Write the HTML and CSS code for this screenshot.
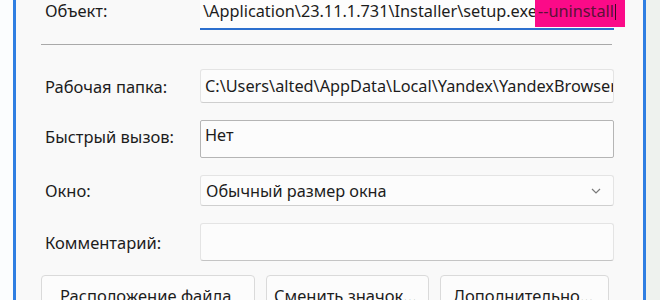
FILE: index.html
```html
<!DOCTYPE html>
<html lang="ru">

<head>
    <meta charset="UTF-8" />
    <meta name="viewport" content="width=device-width, initial-scale=1.0" />
    <title>Свойства ярлыка</title>
    <link rel="stylesheet" href="styles.css">
</head>

<body>
    <div class="edge-left"></div>
    <div class="stripe"></div>

    <div class="dialog">
        <div class="row row-target">
            <label class="label">Объект:</label>
            <div class="field field-active">
                <span>\Application\23.11.1.731\Installer\setup.exe </span><span class="mark">--uninstall<i class="caret"></i></span>
            </div>
        </div>

        <hr class="sep" />

        <div class="row row-folder">
            <label class="label">Рабочая папка:</label>
            <div class="field">C:\Users\alted\AppData\Local\Yandex\YandexBrowser\Application</div>
        </div>

        <div class="row row-hotkey">
            <label class="label label-hotkey">Быстрый вызов:</label>
            <div class="field field-hotkey">Нет</div>
        </div>

        <div class="row row-window">
            <label class="label">Окно:</label>
            <div class="field field-select">
                <span>Обычный размер окна</span>
                <svg class="chevron" width="10" height="6" viewBox="0 0 10 6">
                    <path d="M1 1 L5 5 L9 1" fill="none" stroke="#7a7a7a" stroke-width="1.2" />
                </svg>
            </div>
        </div>

        <div class="row row-comment">
            <label class="label">Комментарий:</label>
            <div class="field field-comment"></div>
        </div>

        <div class="buttons">
            <button class="btn btn-location">Расположение файла</button>
            <button class="btn btn-icon">Сменить значок...</button>
            <button class="btn btn-more">Дополнительно...</button>
        </div>
    </div>

    <div class="stripe"></div>
    <div class="edge-right"></div>
</body>

</html>
```

FILE: styles.css
```css
html,
body {
    margin: 0;
    height: 300px;
    overflow: hidden;
}

body {
    display: flex;
    font-family: "Noto Sans", "Open Sans", sans-serif;
    font-size: 16.5px;
    color: #1c1c1c;
    background-color: #fafcfd;
}

.edge-left {
    width: 13px;
    background-color: #fbfdfe;
}

.edge-right {
    flex: 1;
    background-color: #eef2ee;
}

.stripe {
    width: 3px;
    background-color: #2f7fe2;
}

.dialog {
    width: 627px;
    padding-left: 25px;
    box-sizing: border-box;
    background-color: #f9f9f9;
}

.row {
    display: flex;
    align-items: center;
    width: 573px;
}

.label {
    width: 159px;
    padding-left: 4px;
    box-sizing: border-box;
    flex-shrink: 0;
}

.field {
    flex: 1;
    min-width: 0;
    height: 100%;
    box-sizing: border-box;
    padding: 0 4px;
    display: flex;
    align-items: center;
    white-space: nowrap;
    overflow: hidden;
    font-size: 16.3px;
    background-color: #fcfcfc;
    border: 1px solid #e4e4e4;
    border-bottom-color: #cfcfcf;
    border-radius: 3px;
}

/* first row is cut by the top of the screenshot */
.row-target {
    height: 30px;
    align-items: flex-start;
}

.row-target .label {
    line-height: 22px;
}

.field-active {
    overflow: visible;
    align-items: flex-start;
    line-height: 22px;
    padding-left: 3px;
    border: none;
    border-radius: 0;
    border-bottom: 2px solid #2c6fce;
    background-color: #fdfdfd;
}

.mark {
    display: inline-block;
    flex-shrink: 0;
    height: 27px;
    margin-left: -2px;
    padding: 0 9px 0 3px;
    background-color: #fb0a88;
    color: #5c1237;
}

.caret {
    display: inline-block;
    width: 1px;
    height: 16px;
    margin-left: 1px;
    vertical-align: -3px;
    background-color: #3a0a20;
}

.sep {
    margin: 14px 0 0;
    width: 571px;
    border: none;
    border-top: 1px solid #a9a9a9;
}

.row-folder {
    margin-top: 24px;
    height: 34px;
}

.row-hotkey {
    margin-top: 17px;
    height: 38px;
}

.label-hotkey {
    margin-top: -5px;
}

.field-hotkey {
    align-items: flex-start;
    padding-top: 3px;
    border-color: #b5b5b5;
    border-radius: 2px;
}

.row-window {
    margin-top: 17px;
    height: 31px;
}

.field-select {
    justify-content: space-between;
    padding: 0 12px 0 5px;
}

.chevron {
    display: block;
}

.row-comment {
    margin-top: 17px;
    height: 38px;
}

.field-comment {
    border-bottom-color: #c4c4c4;
}

.buttons {
    display: flex;
    gap: 11px;
    margin-top: 14px;
}

.btn {
    height: 40px;
    font-family: inherit;
    font-size: 16.5px;
    color: #1c1c1c;
    text-align: left;
    padding: 0 0 0 18px;
    white-space: nowrap;
    background-color: #fcfcfc;
    border: 1px solid #dadada;
    border-radius: 4px;
}

.btn-location {
    width: 214px;
}

.btn-icon {
    width: 163px;
    padding-left: 7px;
}

.btn-more {
    width: 169px;
    padding-left: 12px;
}
```
